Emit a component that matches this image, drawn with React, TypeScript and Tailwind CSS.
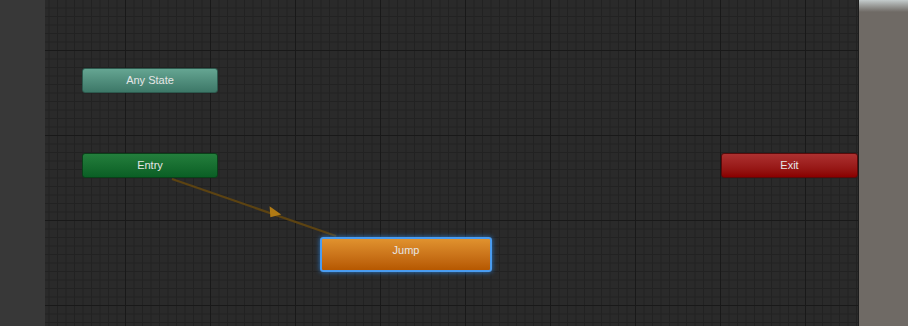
import React from "react";

function StateNode({
  label,
  className,
}: {
  label: string;
  className: string;
}) {
  return (
    <div
      className={`absolute flex justify-center rounded-[3px] text-[11px] text-[#e6e6e6] ${className}`}
      style={{ fontFamily: '"Liberation Sans", Arial, sans-serif' }}
    >
      {label}
    </div>
  );
}

export default function App() {
  return (
    <div className="flex h-[326px] w-[908px] overflow-hidden bg-[#282828]">
      <div className="h-full w-[45px] shrink-0 bg-[#383838]" />
      <div className="relative h-full w-[814px] shrink-0 border-r border-[#1c1c1c] bg-[#2a2a2a] [background-image:linear-gradient(to_right,#191919_1px,transparent_1px),linear-gradient(to_bottom,#191919_1px,transparent_1px),linear-gradient(to_right,#222222_1px,transparent_1px),linear-gradient(to_bottom,#222222_1px,transparent_1px)] [background-size:85px_85px,85px_85px,8.5px_8.5px,8.5px_8.5px] [background-position:80px_50px,80px_50px,80px_50px,80px_50px]">
        <svg
          className="absolute left-0 top-0"
          width="814"
          height="326"
          viewBox="0 0 814 326"
        >
          <line
            x1="127"
            y1="179"
            x2="291"
            y2="236"
            stroke="#5c4312"
            strokeWidth="2.2"
          />
          <polygon
            points="225,206 236,215 225,217"
            fill="#b07a14"
            transform="rotate(-4 230 212)"
          />
        </svg>
        <StateNode
          label="Any State"
          className="left-[37px] top-[68px] h-[25px] w-[136px] items-center border border-[#2d5a4e] bg-gradient-to-b from-[#65a592] to-[#3d7868]"
        />
        <StateNode
          label="Entry"
          className="left-[37px] top-[153px] h-[25px] w-[136px] items-center border border-[#0a4019] bg-gradient-to-b from-[#237e3c] to-[#0a5f25]"
        />
        <StateNode
          label="Exit"
          className="left-[676px] top-[153px] h-[25px] w-[137px] items-center border border-[#5a0a0a] bg-gradient-to-b from-[#ac3030] to-[#8a0000]"
        />
        <StateNode
          label="Jump"
          className="left-[275px] top-[237px] h-[35px] w-[172px] items-start pt-[3px] border-2 border-[#4a9cf0] bg-gradient-to-b from-[#e0922e] to-[#b65800] shadow-[0_0_5px_#2a78c8]"
        />
      </div>
      <div className="flex h-full flex-1 flex-col bg-[#6f6a65]">
        <div className="h-[12px] w-full bg-gradient-to-b from-[#c4cccc] to-[#6f6a65]" />
      </div>
    </div>
  );
}
